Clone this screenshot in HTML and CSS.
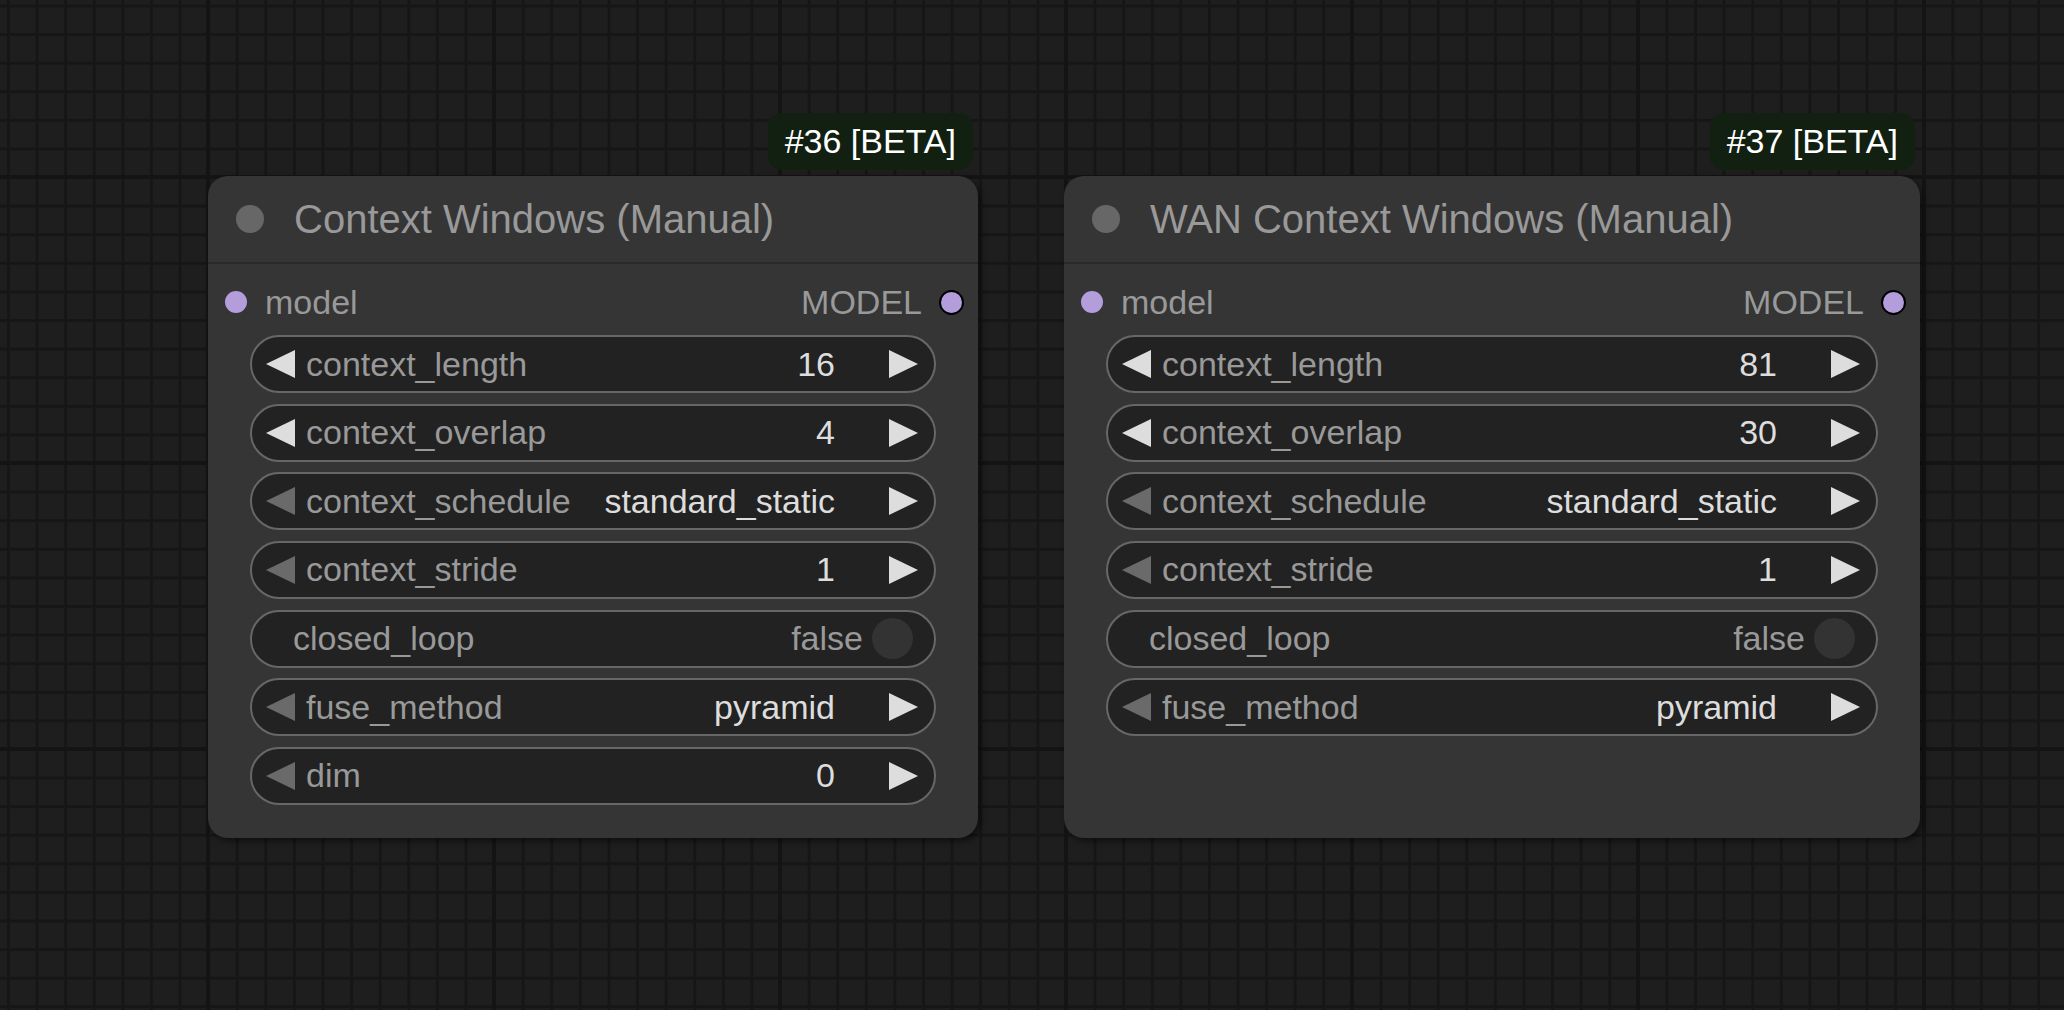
FILE: index.html
```html
<!DOCTYPE html>
<html lang="en">
<head>
    <meta charset="UTF-8">
    <title>Context Windows</title>
    <link rel="stylesheet" href="styles.css">
</head>
<body>
    <div class="canvas">

        <!-- node #36 -->
        <div class="node node-36">
            <div class="badge">#36 [BETA]</div>
            <div class="node-title">
                <span class="title-dot"></span>
                <span class="title-text">Context Windows (Manual)</span>
            </div>
            <div class="node-body">
                <div class="slot-row">
                    <span class="slot slot-in"></span>
                    <span class="slot-name">model</span>
                    <span class="slot-type">MODEL</span>
                    <span class="slot slot-out"></span>
                </div>
                <div class="widgets">
                    <div class="widget">
                        <span class="arrow-left"></span>
                        <span class="label">context_length</span>
                        <span class="value">16</span>
                        <span class="arrow-right"></span>
                    </div>
                    <div class="widget">
                        <span class="arrow-left"></span>
                        <span class="label">context_overlap</span>
                        <span class="value">4</span>
                        <span class="arrow-right"></span>
                    </div>
                    <div class="widget">
                        <span class="arrow-left dim"></span>
                        <span class="label">context_schedule</span>
                        <span class="value">standard_static</span>
                        <span class="arrow-right"></span>
                    </div>
                    <div class="widget">
                        <span class="arrow-left dim"></span>
                        <span class="label">context_stride</span>
                        <span class="value">1</span>
                        <span class="arrow-right"></span>
                    </div>
                    <div class="widget toggle">
                        <span class="label">closed_loop</span>
                        <span class="toggle-value">false</span>
                        <span class="toggle-knob"></span>
                    </div>
                    <div class="widget">
                        <span class="arrow-left dim"></span>
                        <span class="label">fuse_method</span>
                        <span class="value">pyramid</span>
                        <span class="arrow-right"></span>
                    </div>
                    <div class="widget">
                        <span class="arrow-left dim"></span>
                        <span class="label">dim</span>
                        <span class="value">0</span>
                        <span class="arrow-right"></span>
                    </div>
                </div>
            </div>
        </div>

        <!-- node #37 -->
        <div class="node node-37">
            <div class="badge">#37 [BETA]</div>
            <div class="node-title">
                <span class="title-dot"></span>
                <span class="title-text">WAN Context Windows (Manual)</span>
            </div>
            <div class="node-body">
                <div class="slot-row">
                    <span class="slot slot-in"></span>
                    <span class="slot-name">model</span>
                    <span class="slot-type">MODEL</span>
                    <span class="slot slot-out"></span>
                </div>
                <div class="widgets">
                    <div class="widget">
                        <span class="arrow-left"></span>
                        <span class="label">context_length</span>
                        <span class="value">81</span>
                        <span class="arrow-right"></span>
                    </div>
                    <div class="widget">
                        <span class="arrow-left"></span>
                        <span class="label">context_overlap</span>
                        <span class="value">30</span>
                        <span class="arrow-right"></span>
                    </div>
                    <div class="widget">
                        <span class="arrow-left dim"></span>
                        <span class="label">context_schedule</span>
                        <span class="value">standard_static</span>
                        <span class="arrow-right"></span>
                    </div>
                    <div class="widget">
                        <span class="arrow-left dim"></span>
                        <span class="label">context_stride</span>
                        <span class="value">1</span>
                        <span class="arrow-right"></span>
                    </div>
                    <div class="widget toggle">
                        <span class="label">closed_loop</span>
                        <span class="toggle-value">false</span>
                        <span class="toggle-knob"></span>
                    </div>
                    <div class="widget">
                        <span class="arrow-left dim"></span>
                        <span class="label">fuse_method</span>
                        <span class="value">pyramid</span>
                        <span class="arrow-right"></span>
                    </div>
                </div>
            </div>
        </div>

    </div>
</body>
</html>
```

FILE: styles.css
```css
body {
    margin: 0;
    font-family: "Liberation Sans", Arial, sans-serif;
    background-color: #1e1e1e;
    overflow: hidden;
}
.canvas {
    position: relative;
    width: 2064px;
    height: 1010px;
    background-color: #1e1e1e;
    background-image:
        linear-gradient(to right, #141414 0, #141414 4px, transparent 4px),
        linear-gradient(to bottom, #141414 0, #141414 4px, transparent 4px),
        linear-gradient(to right, #161616 0, #161616 3px, transparent 3px),
        linear-gradient(to bottom, #161616 0, #161616 3px, transparent 3px);
    background-size: 286px 100%, 100% 286px, 28.6px 100%, 100% 28.6px;
    background-position: 206px 0, 0 175px, 7px 0, 0 4.5px;
}

/* nodes sit on the free canvas */
.node {
    position: absolute;
    top: 176px;
    height: 662px;
    box-sizing: border-box;
    background-color: #353535;
    border-radius: 20px;
    box-shadow: 3px 3px 6px rgba(0,0,0,0.5);
}
.node-36 { left: 208px; width: 770px; }
.node-37 { left: 1064px; width: 856px; }

.badge {
    position: absolute;
    top: -63px;
    right: 5px;
    height: 57px;
    line-height: 57px;
    padding: 0 17px;
    background-color: #122012;
    border-radius: 14px;
    color: #fff;
    font-size: 34px;
    white-space: nowrap;
}

.node-title {
    display: flex;
    align-items: center;
    height: 88px;
    box-sizing: border-box;
    padding-left: 28px;
    border-bottom: 2px solid #2a2a2a;
}
.title-dot {
    width: 28px;
    height: 28px;
    border-radius: 50%;
    background-color: #676767;
    flex-shrink: 0;
}
.title-text {
    margin-left: 30px;
    color: #999;
    font-size: 40px;
    white-space: nowrap;
}

.node-body {
    padding: 16px 42px 0 42px;
}
.slot-row {
    display: flex;
    align-items: center;
    height: 44px;
    margin: 0 -42px 11px -42px;
    padding: 0 14px 0 17px;
    font-size: 34px;
    color: #999;
}
.slot {
    border-radius: 50%;
    background-color: #b39ddb;
    flex-shrink: 0;
}
.slot-in {
    width: 22px;
    height: 22px;
}
.slot-out {
    width: 21px;
    height: 21px;
    border: 2px solid #000;
}
.slot-name {
    margin-left: 18px;
    flex: 1;
}
.slot-type {
    margin-right: 17px;
}

.widgets {
    display: flex;
    flex-direction: column;
    gap: 10.67px;
}
.widget {
    display: flex;
    align-items: center;
    height: 58px;
    box-sizing: border-box;
    padding: 0 16px 0 14px;
    border: 2px solid #676767;
    border-radius: 29px;
    background-color: #222;
    font-size: 34px;
    white-space: nowrap;
}
.label {
    flex: 1;
    margin-left: 11px;
    color: #999;
}
.value {
    margin-right: 54px;
    color: #ddd;
}
.arrow-left {
    width: 0;
    height: 0;
    border-top: 14px solid transparent;
    border-bottom: 14px solid transparent;
    border-right: 29px solid #ddd;
}
.arrow-left.dim {
    border-right-color: #6a6a6a;
}
.arrow-right {
    width: 0;
    height: 0;
    border-top: 14px solid transparent;
    border-bottom: 14px solid transparent;
    border-left: 29px solid #ddd;
}

.widget.toggle {
    padding: 0 21px 0 30px;
}
.toggle-value {
    color: #999;
}
.toggle-knob {
    width: 41px;
    height: 41px;
    margin-left: 9px;
    border-radius: 50%;
    background-color: #333;
}
```
